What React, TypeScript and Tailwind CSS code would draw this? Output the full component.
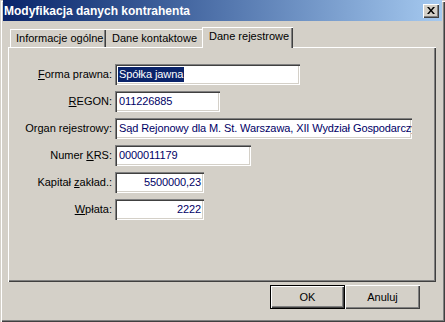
import React from "react";

const raised =
  "shadow-[inset_1px_1px_0_#ffffff,inset_-1px_-1px_0_#404040,inset_-2px_-2px_0_#808080]";

function Field({
  w,
  right,
  children,
}: {
  w: string;
  right?: boolean;
  children: React.ReactNode;
}) {
  return (
    <div
      className={`h-[21px] ${w} bg-white shadow-[inset_1px_1px_0_#808080,inset_2px_2px_0_#404040,inset_-1px_-1px_0_#ffffff,inset_-2px_-2px_0_#d4d0c8] flex items-center pl-[4px] pr-[3px] overflow-hidden whitespace-nowrap text-[#000066] tracking-[-0.1px] ${
        right ? "justify-end" : ""
      }`}
    >
      {children}
    </div>
  );
}

function Label({ children }: { children: React.ReactNode }) {
  return (
    <div className="h-[21px] flex items-center justify-end whitespace-nowrap text-black">
      {children}
    </div>
  );
}

export default function App() {
  return (
    <div className="w-[445px] h-[322px] bg-[#d4d0c8] shadow-[inset_1px_1px_0_#d4d0c8,inset_2px_2px_0_#ffffff,inset_-1px_-1px_0_#404040,inset_-2px_-2px_0_#808080] font-['Liberation_Sans',Arial,sans-serif] text-[11px] leading-none select-none">
      {/* Title bar */}
      <div className="mx-[3px] h-[21px] bg-gradient-to-r from-[#0a246a] to-[#a6caf0] flex items-center pl-[1px]">
        <span className="text-white font-bold text-[12px]">Modyfikacja danych kontrahenta</span>
        <div className={`ml-auto mr-[3px] w-[16px] h-[14px] bg-[#d4d0c8] ${raised} flex items-center justify-center`}>
          <svg width="8" height="7" viewBox="0 0 8 7">
            <path d="M0 0h2l2 2.5L6 0h2L5 3.5 8 7H6L4 4.5 2 7H0l3-3.5z" fill="#000" />
          </svg>
        </div>
      </div>

      {/* Tabs + panel */}
      <div className="ml-[8px] mt-[6px] w-[428px]">
        <div className="h-[20px] flex items-start pl-[2px]">
          <div className="mt-[2px] h-[18px] w-[96px] pl-[6px] pt-[4px] text-black shadow-[inset_1px_1px_0_#ffffff,inset_-1px_0_0_#404040,inset_-2px_0_0_#808080]">
            Informacje ogólne
          </div>
          <div className="mt-[2px] h-[18px] w-[96px] pl-[6px] pt-[4px] text-black shadow-[inset_0_1px_0_#ffffff]">
            Dane kontaktowe
          </div>
          <div className="relative z-10 h-[21px] w-[91px] bg-[#d4d0c8] pl-[7px] pt-[4px] text-black shadow-[inset_1px_1px_0_#ffffff,inset_-1px_0_0_#404040,inset_-2px_0_0_#808080]">
            Dane rejestrowe
          </div>
        </div>
        <div className="h-[235px] pt-[17px] pl-[2px] shadow-[inset_1px_1px_0_#ffffff,inset_-1px_-1px_0_#404040,inset_-2px_-2px_0_#808080]">
          <div className="grid grid-cols-[102px_auto] gap-x-[3px] gap-y-[6px] justify-start">
            <Label>
              <span>
                <u>F</u>orma prawna:
              </span>
            </Label>
            <Field w="w-[185px]">
              <span className="bg-[#0a246a] text-white -ml-[1px] pl-[1px] pr-[1px] py-[2px]">Spółka jawna</span>
            </Field>

            <Label>
              <span>
                <u>R</u>EGON:
              </span>
            </Label>
            <Field w="w-[105px]">011226885</Field>

            <Label>Organ rejestrowy:</Label>
            <Field w="w-[297px]">Sąd Rejonowy dla M. St. Warszawa, XII Wydział Gospodarczy</Field>

            <Label>
              <span>
                Numer <u>K</u>RS:
              </span>
            </Label>
            <Field w="w-[136px]">0000011179</Field>

            <Label>
              <span>
                Kapitał <u>z</u>akład.:
              </span>
            </Label>
            <Field w="w-[89px]" right>
              5500000,23
            </Field>

            <Label>
              <span>
                <u>W</u>płata:
              </span>
            </Label>
            <Field w="w-[89px]" right>
              2222
            </Field>
          </div>
        </div>
      </div>

      {/* Buttons */}
      <div className="mt-[3px] flex justify-end pr-[25px]">
        <button className="w-[75px] h-[24px] bg-[#d4d0c8] text-black text-[11px] shadow-[inset_0_0_0_1px_#000000,inset_2px_2px_0_#ffffff,inset_-2px_-2px_0_#404040,inset_-3px_-3px_0_#808080]">
          OK
        </button>
        <button className={`w-[75px] h-[24px] bg-[#d4d0c8] text-black text-[11px] ${raised}`}>Anuluj</button>
      </div>
    </div>
  );
}
